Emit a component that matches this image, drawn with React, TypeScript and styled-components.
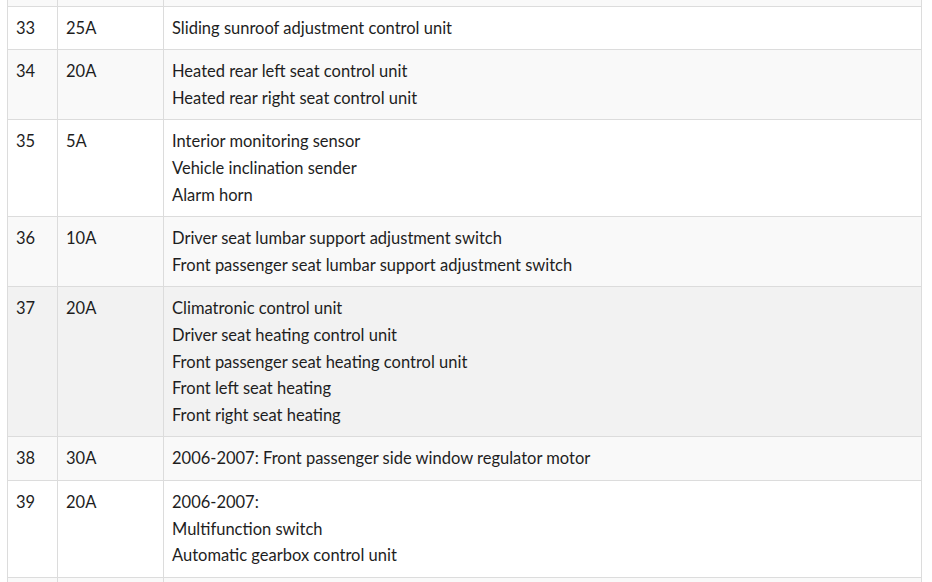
import React from 'react';
import styled, { createGlobalStyle } from 'styled-components';

type Tone = 'plain' | 'striped' | 'hover';

type Fuse = {
  no: string,
  amp: string,
  items: string[],
  tone: Tone,
};

const fuses: Fuse[] = [
  { no: '32', amp: '5A', items: ['Mobile telephone operating electronics control unit'], tone: 'striped' },
  { no: '33', amp: '25A', items: ['Sliding sunroof adjustment control unit'], tone: 'plain' },
  { no: '34', amp: '20A', items: ['Heated rear left seat control unit', 'Heated rear right seat control unit'], tone: 'striped' },
  { no: '35', amp: '5A', items: ['Interior monitoring sensor', 'Vehicle inclination sender', 'Alarm horn'], tone: 'plain' },
  { no: '36', amp: '10A', items: ['Driver seat lumbar support adjustment switch', 'Front passenger seat lumbar support adjustment switch'], tone: 'striped' },
  {
    no: '37', amp: '20A', tone: 'hover', items: [
      'Climatronic control unit',
      'Driver seat heating control unit',
      'Front passenger seat heating control unit',
      'Front left seat heating',
      'Front right seat heating',
    ],
  },
  { no: '38', amp: '30A', items: ['2006-2007: Front passenger side window regulator motor'], tone: 'striped' },
  { no: '39', amp: '20A', items: ['2006-2007:', 'Multifunction switch', 'Automatic gearbox control unit'], tone: 'plain' },
  { no: '40', amp: '20A', items: ['Cigarette lighter'], tone: 'striped' },
];

const GlobalStyle = createGlobalStyle`
  html, body {
    margin: 0;
    padding: 0;
    background: #fff;
  }
  body {
    font-family: Lato, "Noto Sans", sans-serif;
    color: #1e1e1e;
  }
`;

export default function App() {
  return (
    <>
      <GlobalStyle />
      <Viewport>
        <FuseTable>
          <colgroup>
            <col style={{ width: 50 }} />
            <col style={{ width: 106 }} />
            <col />
          </colgroup>
          <tbody>
            {fuses.map(f => (
              <Row key={f.no} tone={f.tone}>
                <Cell>{f.no}</Cell>
                <Cell>{f.amp}</Cell>
                <Cell>
                  {f.items.map((item, i) => (
                    <Line key={i}>{item}</Line>
                  ))}
                </Cell>
              </Row>
            ))}
          </tbody>
        </FuseTable>
      </Viewport>
    </>
  );
}

/* page is scrolled: only the bottom edge of row 32 shows */
const Viewport = styled.div`
  height: 582px;
  overflow: hidden;
  padding: 0 10px 0 7px;
`;
const FuseTable = styled.table`
  width: 915px;
  border-collapse: collapse;
  table-layout: fixed;
  margin-top: -38px;
  font-size: 16.5px;
  line-height: 26.6px;
`;
const toneColor = {
  plain: '#ffffff',
  striped: '#f9f9f9',
  hover: '#f2f2f2',
};
const Row = styled.tr<{ tone: Tone }>`
  background: ${props => toneColor[props.tone]};
`;
const Cell = styled.td`
  border: 1px solid #dcdcdc;
  padding: 8px 8px;
  vertical-align: top;
  text-align: left;
`;
const Line = styled.div`
  white-space: nowrap;
`;
